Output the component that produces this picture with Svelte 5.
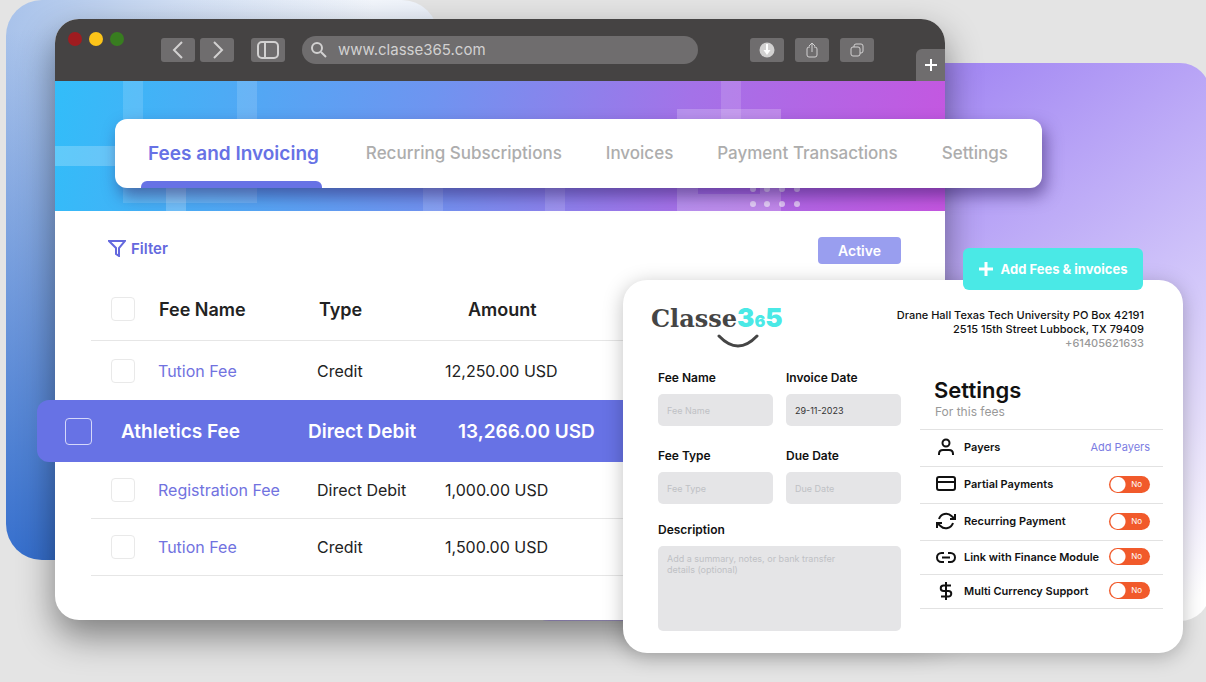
<script>
  const tabs = [
    "Fees and Invoicing",
    "Recurring Subscriptions",
    "Invoices",
    "Payment Transactions",
    "Settings",
  ];

  const fees = [
    { name: "Tution Fee", type: "Credit", amount: "12,250.00 USD" },
    { name: "Athletics Fee", type: "Direct Debit", amount: "13,266.00 USD", active: true },
    { name: "Registration Fee", type: "Direct Debit", amount: "1,000.00 USD", short: true },
    { name: "Tution Fee", type: "Credit", amount: "1,500.00 USD", short: true },
  ];

  const options = [
    { id: "partial", label: "Partial Payments" },
    { id: "recurring", label: "Recurring Payment" },
    { id: "link", label: "Link with Finance Module", compact: true },
    { id: "currency", label: "Multi Currency Support", compact: true },
  ];
</script>

<div class="stage">
  <div class="backdrop blue"></div>
  <div class="backdrop purple"></div>

  <main class="window">
    <header class="toolbar">
      <div class="lights"><i class="red"></i><i class="yellow"></i><i class="green"></i></div>
      <button class="tool" aria-label="Back">
        <svg width="14" height="18" viewBox="0 0 14 18"><path d="M11 1 3 9l8 8" /></svg>
      </button>
      <button class="tool forward" aria-label="Forward">
        <svg width="14" height="18" viewBox="0 0 14 18"><path d="m4 1 8 8-8 8" /></svg>
      </button>
      <button class="tool sidebar" aria-label="Sidebar">
        <svg width="22" height="18" viewBox="0 0 22 18"
          ><rect x="1" y="1" width="20" height="16" rx="4" /><path d="M8 1v16" /></svg
        >
      </button>
      <label class="address">
        <svg width="18" height="18" viewBox="0 0 18 18"
          ><circle cx="7" cy="7" r="5" /><path d="m11 11 5 5" /></svg
        >
        <input type="text" value="www.classe365.com" aria-label="Address" />
      </label>
      <div class="actions">
        <button class="tool" aria-label="Downloads">
          <svg width="16" height="16" viewBox="0 0 16 16"
            ><circle cx="8" cy="8" r="7.500" fill="#d2d1d1" stroke="none" /><path
              d="M8 2v6"
              stroke="#fff"
              stroke-width="2"
            /><path d="M4.500 8h7L8 13z" fill="#fff" stroke="none" /></svg
          >
        </button>
        <button class="tool thin" aria-label="Share">
          <svg width="14" height="16" viewBox="0 0 14 16"
            ><path d="M5 5H4Q2 5 2 7v6q0 2 2 2h6q2 0 2-2V7q0-2-2-2H9M7 10V1M4 4l3-3 3 3" /></svg
          >
        </button>
        <button class="tool thin" aria-label="Tabs">
          <svg width="14" height="14" viewBox="0 0 14 14"
            ><rect x="1" y="4" width="9" height="9" rx="2" /><path
              d="M4 4V3q0-2 2-2h5q2 0 2 2v5q0 2-2 2h-1"
            /></svg
          >
        </button>
      </div>
      <button class="new-tab" aria-label="New tab">
        <svg width="14" height="14" viewBox="0 0 14 14"><path d="M7 1v12M1 7h12" /></svg>
      </button>
    </header>

    <section class="banner">
      <svg class="pattern" viewBox="0 0 890 130" preserveAspectRatio="none">
        <g fill-opacity=".14">
          <path d="M68 0h20v122H68zM182 0h20v122h-20zM88 102h94v20H88z" />
          <path d="M368 100h20v30h-20zM490 100h20v30h-20zM666 0h20v50h-20z" />
        </g>
        <g fill-opacity=".22">
          <path d="M0 65h70v20H0zM111 100h20v30h-20z" />
          <path
            fill-rule="evenodd"
            d="M622 28h104v102H622zM643 50v63h62V50z"
          />
        </g>
        <g fill-opacity=".6">
          <circle cx="698" cy="108" r="3" /><circle cx="712" cy="108" r="3" />
          <circle cx="727" cy="108" r="3" /><circle cx="742" cy="108" r="3" />
          <circle cx="698" cy="123" r="3" /><circle cx="712" cy="123" r="3" />
          <circle cx="727" cy="123" r="3" /><circle cx="742" cy="123" r="3" />
        </g>
      </svg>
      <nav class="tabs">
        {#each tabs as tab, i}
          <a href="#tab-{i}" class:current={i === 0}>{tab}</a>
        {/each}
      </nav>
    </section>

    <section class="content">
      <div class="bar">
        <button class="filter">
          <svg width="18" height="17" viewBox="0 0 18 17"
            ><path d="M1 1h16l-6 7v8l-3-2V8z" /></svg
          >
          Filter
        </button>
        <button class="status">Active</button>
      </div>

      <table>
        <thead>
          <tr>
            <th><input type="checkbox" aria-label="Select all" /></th>
            <th>Fee Name</th>
            <th>Type</th>
            <th>Amount</th>
          </tr>
        </thead>
        <tbody>
          {#each fees as fee}
            <tr class:active={fee.active} class:short={fee.short}>
              <td><input type="checkbox" aria-label="Select {fee.name}" /></td>
              <td class="name">{fee.name}</td>
              <td>{fee.type}</td>
              <td>{fee.amount}</td>
            </tr>
          {/each}
        </tbody>
      </table>
    </section>
  </main>

  <section class="panel">
    <button class="add">
      <svg width="14" height="14" viewBox="0 0 14 14"><path d="M7 0v14M0 7h14" /></svg>
      Add Fees &amp; invoices
    </button>

    <header class="panel-head">
      <div class="logo">
        <div class="word">Classe<span>3<small>6</small>5</span></div>
        <svg width="42" height="14" viewBox="0 0 42 14"><path d="M2 2q19 20 38 0" /></svg>
      </div>
      <address>
        Drane Hall Texas Tech University PO Box 42191<br />
        2515 15th Street Lubbock, TX 79409<br />
        <span>+61405621633</span>
      </address>
    </header>

    <div class="panel-body">
      <form>
        <div class="fields">
          <label>Fee Name <input type="text" placeholder="Fee Name" /></label>
          <label>Invoice Date <input type="text" value="29-11-2023" /></label>
          <label>Fee Type <input type="text" placeholder="Fee Type" /></label>
          <label>Due Date <input type="text" placeholder="Due Date" /></label>
        </div>
        <label>
          Description
          <textarea placeholder="Add a summary, notes, or bank transfer details (optional)"
          ></textarea>
        </label>
      </form>

      <div class="settings">
        <h2>Settings</h2>
        <p>For this fees</p>
        <ul>
          <li>
            <svg width="20" height="20" viewBox="0 0 20 20"
              ><circle cx="10" cy="6" r="3.500" /><path d="M3 18v-1q0-4 4-4h6q4 0 4 4v1" /></svg
            >
            <span>Payers</span>
            <a href="#payers">Add Payers</a>
          </li>
          {#each options as option}
            <li class:compact={option.compact}>
              <svg width="20" height="20" viewBox="0 0 20 20">
                {#if option.id === "partial"}
                  <rect x="1" y="3" width="18" height="13" rx="2" /><path d="M1 8h18" />
                {:else if option.id === "recurring"}
                  <path
                    d="M19 3v5h-5M1 17v-5h5M3 8a7.500 7.500 0 0 1 12.500-3L19 8M1 12l3.500 3A7.500 7.500 0 0 0 17 12"
                  />
                {:else if option.id === "link"}
                  <path
                    d="M8 15H5.500a4.500 4.500 0 0 1 0-9H8M12 6h2.500a4.500 4.500 0 0 1 0 9H12M6 10.500h8"
                  />
                {:else}
                  <path
                    d="M10 1v18M15 4.500H7.500a2.750 2.750 0 0 0 0 5.500h5a2.750 2.750 0 0 1 0 5.500H5"
                  />
                {/if}
              </svg>
              <label for={option.id}>{option.label}</label>
              <div class="switch">
                <input type="checkbox" role="switch" id={option.id} />
                <span>No</span>
              </div>
            </li>
          {/each}
        </ul>
      </div>
    </div>
  </section>
</div>

<style>
  :global(body) {
    background: #e4e4e4;
  }

  .stage {
    position: relative;
    box-sizing: border-box;
    min-height: 100vh;
    padding: 19px 261px 62px 55px;
    overflow: hidden;
    font-family: Inter, "Liberation Sans", sans-serif;
    color: #222;
  }

  button,
  input,
  textarea {
    font: inherit;
    border: 0;
    margin: 0;
    padding: 0;
  }

  a {
    text-decoration: none;
  }

  svg {
    fill: none;
    stroke: currentColor;
    stroke-width: 2;
    flex: none;
  }

  .backdrop {
    position: absolute;
  }

  .blue {
    left: 6px;
    top: 0;
    width: 432px;
    height: 560px;
    border-radius: 36px;
    background: linear-gradient(170deg, transparent 5%, #2b67ca 96%),
      linear-gradient(90deg, #a8c2ea, #fff 85%);
  }

  .purple {
    left: 520px;
    right: -4px;
    top: 63px;
    height: 558px;
    border-radius: 30px;
    background: linear-gradient(145deg, #a388f3 30%, #d3c8fa 67%, #e4ddfa 80%, #fff 97%);
  }

  .window {
    position: relative;
    border-radius: 24px;
    background: #fff;
    box-shadow: 0 16px 36px rgba(0, 0, 0, 0.45);
  }

  .toolbar {
    display: flex;
    align-items: center;
    height: 62px;
    padding-left: 13px;
    border-radius: 24px 24px 0 0;
    background: #454343;
    overflow: hidden;
    color: #d2d1d1;
  }

  .lights {
    display: flex;
    align-self: flex-start;
    gap: 7px;
    padding-top: 13px;
    margin-right: 37px;
  }

  .lights i {
    width: 14px;
    height: 14px;
    border-radius: 50%;
  }

  .red {
    background: #9f1c20;
  }

  .yellow {
    background: #fcc419;
  }

  .green {
    background: #387d20;
  }

  .tool {
    display: flex;
    align-items: center;
    justify-content: center;
    flex: none;
    width: 34px;
    height: 24px;
    border-radius: 3px;
    background: #6f6d6e;
    color: inherit;
  }

  .forward {
    margin-left: 5px;
  }

  .sidebar {
    margin-left: 17px;
  }

  .thin svg {
    stroke-width: 1;
  }

  .address {
    display: flex;
    align-items: center;
    flex: 1;
    gap: 10px;
    height: 28px;
    margin: 0 52px 0 17px;
    padding: 0 8px;
    border-radius: 14px;
    background: #6f6d6e;
  }

  .address input {
    flex: 1;
    min-width: 0;
    padding-bottom: 2px;
    background: none;
    color: inherit;
    font-size: 15px;
  }

  .actions {
    display: flex;
    gap: 11px;
    margin-right: 42px;
  }

  .new-tab {
    display: flex;
    align-items: center;
    justify-content: center;
    align-self: flex-end;
    width: 29px;
    height: 32px;
    border-radius: 6px 0 0 0;
    background: #6f6d6e;
    color: #fff;
  }

  .banner {
    position: relative;
    height: 130px;
    background: linear-gradient(100deg, #32bdf9, #6f94f0 42%, #a472e8 70%, #c556e0);
  }

  .pattern {
    display: block;
    width: 100%;
    height: 100%;
    fill: #fff;
    stroke: none;
  }

  .tabs {
    position: absolute;
    top: 38px;
    left: 60px;
    right: -97px;
    display: flex;
    align-items: center;
    justify-content: space-between;
    box-sizing: border-box;
    height: 69px;
    padding: 0 34px 0 26px;
    border-radius: 12px;
    background: #fff;
    box-shadow: 4px 8px 16px rgba(40, 20, 90, 0.5);
    font-size: 17px;
    font-weight: 500;
    white-space: nowrap;
  }

  .tabs a {
    line-height: 69px;
    color: #adadad;
  }

  .tabs .current {
    padding: 0 3px 0 7px;
    color: #6772e5;
    font-size: 19px;
    font-weight: 600;
  }

  .current::after {
    content: "";
    display: block;
    height: 7px;
    margin: -7px -3px 0 -7px;
    border-radius: 6px 6px 0 0;
    background: #6772e5;
  }

  .content {
    padding: 26px 0 44px 36px;
  }

  .bar {
    display: flex;
    justify-content: space-between;
    margin: 0 44px 14px 17px;
  }

  .filter {
    display: flex;
    align-items: center;
    gap: 5px;
    height: 23px;
    background: none;
    color: #6469de;
    font-size: 15px;
    font-weight: 600;
  }

  .status {
    width: 83px;
    height: 27px;
    border-radius: 4px;
    background: #999eef;
    color: #fff;
    font-size: 14px;
    font-weight: 600;
  }

  table,
  thead,
  tbody {
    display: block;
  }

  tr {
    display: grid;
    grid-template-columns: 67px 159px 128px 1fr;
    align-items: center;
    box-sizing: border-box;
    height: 60px;
    border-bottom: 1px solid #e6e6e6;
    font-size: 16px;
  }

  th,
  td {
    padding: 0;
    text-align: left;
  }

  thead tr {
    grid-template-columns: 68px 160px 149px 1fr;
    height: 63px;
    font-size: 18px;
  }

  th {
    font-weight: 600;
  }

  tr > :first-child {
    padding-left: 20px;
  }

  td input,
  th input {
    display: block;
    appearance: none;
    width: 24px;
    height: 24px;
    border: 1px solid #e9e9e9;
    border-radius: 4px;
    background: #fff;
  }

  .name {
    color: #7172e0;
  }

  .short {
    height: 57px;
  }

  .active {
    grid-template-columns: 84px 187px 150px 1fr;
    height: 62px;
    margin: -1px 0 0 -54px;
    border: 0;
    border-radius: 12px 0 0 12px;
    background: #6772e5;
    color: #fff;
    font-size: 19px;
    font-weight: 600;
  }

  .active > :first-child {
    padding-left: 28px;
  }

  .active .name {
    color: inherit;
  }

  .active input {
    width: 27px;
    height: 27px;
    border-color: #d5d8fa;
    background: none;
  }

  .panel {
    position: absolute;
    top: 280px;
    right: 23px;
    box-sizing: border-box;
    width: 560px;
    padding: 25px 20px 22px 35px;
    border-radius: 24px;
    background: #fff;
    box-shadow: 0 4px 20px rgba(0, 0, 0, 0.25);
    color: #111;
  }

  .add {
    position: absolute;
    top: -32px;
    right: 40px;
    display: flex;
    align-items: center;
    justify-content: center;
    gap: 8px;
    width: 180px;
    height: 42px;
    border-radius: 6px;
    background: #4ae9e6;
    color: #fff;
    font-size: 13px;
    font-weight: 700;
    white-space: nowrap;
  }

  .add svg {
    stroke-width: 3;
  }

  .panel-head {
    display: flex;
    justify-content: space-between;
    height: 65px;
    margin: 0 19px 0 -7px;
  }

  .logo {
    display: flex;
    flex-direction: column;
    color: #454545;
  }

  .logo svg {
    margin-left: 66px;
    stroke-width: 3;
    stroke-linecap: round;
  }

  .word {
    font: bold 24px/26px "DejaVu Serif", serif;
  }

  .word span {
    color: #4ae9e6;
    font-family: Inter, sans-serif;
    font-size: 26px;
    font-weight: 900;
  }

  .word small {
    font-size: 16px;
  }

  address {
    padding-top: 3px;
    font-size: 11px;
    font-style: normal;
    font-weight: 500;
    line-height: 14px;
    text-align: right;
  }

  address span {
    color: #999;
  }

  .panel-body {
    display: grid;
    grid-template-columns: 1fr 1fr;
    gap: 19px;
  }

  form {
    display: flex;
    flex-direction: column;
    gap: 18px;
  }

  .fields {
    display: grid;
    grid-template-columns: 1fr 1fr;
    gap: 22px 13px;
  }

  form label {
    display: flex;
    flex-direction: column;
    gap: 8px;
    font-size: 12px;
    font-weight: 600;
    line-height: 16px;
  }

  form input,
  textarea {
    box-sizing: border-box;
    width: 100%;
    height: 32px;
    padding: 0 9px;
    border-radius: 5px;
    background: #e5e5e7;
    color: #333;
    font-size: 9px;
    font-weight: 400;
  }

  textarea {
    height: 85px;
    padding: 7px 60px 7px 9px;
    line-height: 11px;
    resize: none;
  }

  ::placeholder {
    color: #bfc1c5;
    opacity: 1;
  }

  h2 {
    margin: 8px 14px 0;
    font-size: 22px;
    font-weight: 600;
    line-height: 24px;
  }

  .settings p {
    margin: 2px 15px 9px;
    color: #999;
    font-size: 12px;
    line-height: 16px;
  }

  ul {
    list-style: none;
    margin: 0;
    padding: 0;
    border-top: 1px solid #e2e2e2;
  }

  li {
    display: flex;
    align-items: center;
    gap: 8px;
    box-sizing: border-box;
    height: 37px;
    padding: 0 13px 2px 16px;
    border-bottom: 1px solid #e2e2e2;
    font-size: 11px;
    font-weight: 600;
    white-space: nowrap;
  }

  .compact {
    height: 34px;
  }

  li > :last-child {
    margin-left: auto;
  }

  li a {
    color: #7b7ce2;
    font-weight: 400;
  }

  .switch {
    position: relative;
    display: flex;
  }

  .switch input {
    appearance: none;
    width: 41px;
    height: 17px;
    border-radius: 9px;
    background: radial-gradient(circle at 9px, #fff 7px, #f15a2b 8px);
  }

  .switch span {
    position: absolute;
    top: 0;
    right: 8px;
    color: #fff;
    font-size: 8px;
    font-weight: 400;
    line-height: 17px;
    pointer-events: none;
  }
</style>
